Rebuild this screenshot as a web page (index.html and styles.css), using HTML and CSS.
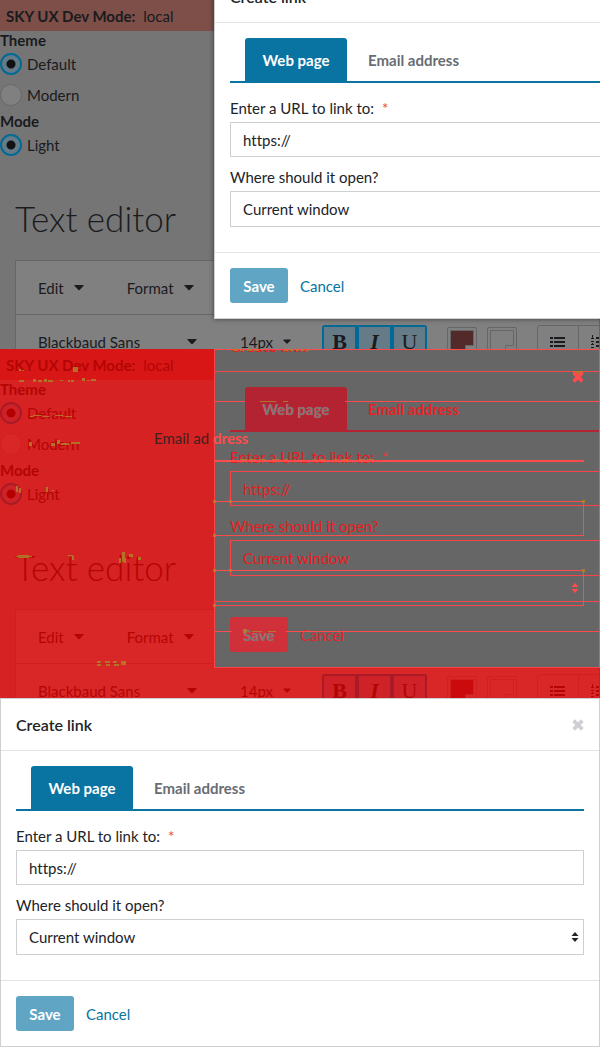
FILE: index.html
```
<!DOCTYPE html>
<html lang="en">
<head>
<meta charset="utf-8">
<meta name="viewport" content="width=device-width, initial-scale=1">
<title>Create link</title>
<link rel="stylesheet" href="styles.css">
</head>
<body>
<svg class="defs" aria-hidden="true">
  <symbol id="caret" viewBox="0 0 10 6"><path d="M0 0.4Q0 0 1 0H9Q10 0 9.6 0.8L5.6 5Q5 5.6 4.4 5L0.4 0.8Z"/></symbol>
  <symbol id="close" viewBox="0 0 12 12"><path d="M3 3L9 9M9 3L3 9" fill="none" stroke="currentColor" stroke-width="3.8" stroke-linecap="square"/></symbol>
  <symbol id="updown" viewBox="0 0 8 12"><path d="M4 1L7.500 5H.5ZM4 11L7.500 7H.5Z"/></symbol>
  <symbol id="bullets" viewBox="0 0 16 12"><path d="M0 1h3v2H0zM4 1h11v2H4zM0 5h3v2H0zM4 5h11v2H4zM0 9h3v2H0zM4 9h11v2H4z"/></symbol>
  <symbol id="numbers" viewBox="0 0 16 14"><path d="M1 0h1v4H1zM0 3h3v1H0zM0 6h3v1H0zM1 8h1v1H1zM0 9h3v1H0zM0 12h3v1H0zM5 2h10v2H5zM5 6h10v2H5zM5 10h10v2H5z"/></symbol>
  <symbol id="swatch" viewBox="0 0 30 30"><path class="swatch-frame" d="M.5 30V2Q.5 .5 2 .5H28Q29.500 .5 29.500 2V30"/><path class="swatch-fill" d="M3.500 3.500H26.500V18.500H18.500V26.500H3.500Z"/></symbol>
</svg>

<main class="stack">
  <section class="frame dimmed" aria-label="Before">
    <div class="demo">
      <div class="banner"><strong>SKY UX Dev Mode:</strong> local</div>
      <fieldset class="choices">
        <legend>Theme</legend>
        <label><input type="radio" name="theme-a" checked>Default</label>
        <label><input type="radio" name="theme-a">Modern</label>
      </fieldset>
      <fieldset class="choices">
        <legend>Mode</legend>
        <label><input type="radio" name="mode-a" checked>Light</label>
      </fieldset>
      <h1>Text editor</h1>
      <div class="editor">
        <div class="menubar">
          <button type="button">Edit<svg class="caret"><use href="#caret"/></svg></button>
          <button type="button">Format<svg class="caret"><use href="#caret"/></svg></button>
        </div>
        <div class="toolbar">
          <button type="button" class="font">Blackbaud Sans<svg class="caret"><use href="#caret"/></svg></button>
          <button type="button" class="size">14px<svg class="caret"><use href="#caret"/></svg></button>
          <div class="styles"><button type="button" class="bold">B</button><button type="button" class="italic">I</button><button type="button" class="underline">U</button></div>
          <button type="button" class="swatch filled" aria-label="Font color"><svg><use href="#swatch"/></svg></button>
          <button type="button" class="swatch" aria-label="Background color"><svg><use href="#swatch"/></svg></button>
          <div class="lists"><button type="button" aria-label="Bulleted list"><svg><use href="#bullets"/></svg></button><button type="button" aria-label="Numbered list"><svg><use href="#numbers"/></svg></button></div>
        </div>
      </div>
    </div>
    <div class="dialog floating">
      <header><h2>Create link</h2><button type="button" class="close" aria-label="Close"><svg><use href="#close"/></svg></button></header>
      <div class="body">
        <div class="tabs"><button type="button" class="tab active">Web page</button><button type="button" class="tab">Email address</button></div>
        <label for="url-a">Enter a URL to link to:<span class="required">*</span></label>
        <input id="url-a" type="text" value="https://">
        <label for="target-a">Where should it open?</label>
        <div class="select"><select id="target-a"><option>Current window</option></select><svg><use href="#updown"/></svg></div>
      </div>
      <footer><button type="button" class="save">Save</button><button type="button" class="cancel">Cancel</button></footer>
    </div>
  </section>

  <section class="frame difference" aria-label="Difference">
    <div class="demo">
      <div class="banner"><strong>SKY UX Dev Mode:</strong> local</div>
      <fieldset class="choices">
        <legend>Theme</legend>
        <label><input type="radio" name="theme-b" checked>Default</label>
        <label><input type="radio" name="theme-b">Modern</label>
      </fieldset>
      <fieldset class="choices">
        <legend>Mode</legend>
        <label><input type="radio" name="mode-b" checked>Light</label>
      </fieldset>
      <h1>Text editor</h1>
      <div class="editor">
        <div class="menubar">
          <button type="button">Edit<svg class="caret"><use href="#caret"/></svg></button>
          <button type="button">Format<svg class="caret"><use href="#caret"/></svg></button>
        </div>
        <div class="toolbar">
          <button type="button" class="font">Blackbaud Sans<svg class="caret"><use href="#caret"/></svg></button>
          <button type="button" class="size">14px<svg class="caret"><use href="#caret"/></svg></button>
          <div class="styles"><button type="button" class="bold">B</button><button type="button" class="italic">I</button><button type="button" class="underline">U</button></div>
          <button type="button" class="swatch filled" aria-label="Font color"><svg><use href="#swatch"/></svg></button>
          <button type="button" class="swatch" aria-label="Background color"><svg><use href="#swatch"/></svg></button>
          <div class="lists"><button type="button" aria-label="Bulleted list"><svg><use href="#bullets"/></svg></button><button type="button" aria-label="Numbered list"><svg><use href="#numbers"/></svg></button></div>
        </div>
      </div>
    </div>
    <div class="dialog floating">
      <header><h2>Create link</h2><button type="button" class="close" aria-label="Close"><svg><use href="#close"/></svg></button></header>
      <div class="body">
        <div class="tabs"><button type="button" class="tab active">Web page</button><button type="button" class="tab">Email address</button></div>
        <label for="url-b">Enter a URL to link to:<span class="required">*</span></label>
        <input id="url-b" type="text" value="https://">
        <label for="target-b">Where should it open?</label>
        <div class="select"><select id="target-b"><option>Current window</option></select><svg><use href="#updown"/></svg></div>
      </div>
      <footer><button type="button" class="save">Save</button><button type="button" class="cancel">Cancel</button></footer>
    </div>
    <svg class="traces" width="600" height="349" viewBox="0 0 600 349">
      <path class="trace" d="M214 0h386v1H214zM214 52h31v1H214zM345 52h255v1H345zM214 111h370v2H214zM214 152h370v1H214zM583 152h1v35h-1zM214 186h370v1H214zM214 221h370v1H214zM583 221h1v36h-1zM214 256h370v1H214zM214 282h18v1H214zM286 282h314v1H286zM599 0h1v319h-1z"/>
      <path class="fleck" d="M19 20h2v2h-2zM22 21h2v1h-2zM73 18h5v5h-5zM19 31h5v2h-5zM33 30h3v3h-3zM38 31h4v2h-4zM44 30h3v3h-3zM48 31h5v2h-5zM60 31h3v1h-3zM68 31h2v2h-2zM71 31h3v2h-3zM82 29h3v3h-3zM87 31h3v1h-3zM91 30h5v2h-5zM30 67h3v1h-3zM33 66h8v1h-8zM43 67h6v1h-6zM55 66h8v1h-8zM65 67h7v1h-7zM29 93h3v4h-3zM51 94h4v3h-4zM57 91h3v4h-3zM61 94h8v2h-8zM71 93h9v2h-9zM16 137h2v6h-2zM19 139h2v5h-2zM46 138h2v5h-2zM52 141h2v1h-2zM16 207h16v1H16zM18 206h11v3H18zM68 206h5v1h-5zM72 207h2v4h-2zM119 209h2v5h-2zM122 203h3v10h-3zM124 209h2v5h-2zM129 205h4v3h-4zM138 208h3v3h-3zM97 312h4v2h-4zM97 315h4v2h-4zM105 312h5v2h-5zM106 315h4v2h-4zM113 312h4v2h-4zM114 315h5v2h-5zM121 312h5v4h-5zM213 151h3v3h-3zM213 185h3v3h-3zM213 220h3v3h-3zM213 255h3v3h-3zM229 151h3v3h-3zM229 220h3v3h-3zM260 52h16v1h-16zM283 52h5v1h-5zM243 280h4v4h-4zM252 282h10v1h-10zM268 282h8v1h-8zM573 22h10v3h-10zM233 0h5v2h-5zM240 1h4v1h-4zM247 0h5v2h-5zM254 1h5v1h-5zM284 1h4v1h-4zM290 0h3v2h-3zM296 1h3v1h-3zM301 0h3v2h-3zM306 1h3v1h-3zM240 110h7v1h-7zM249 110h7v1h-7zM259 110h7v1h-7zM272 110h7v1h-7zM284 110h4v1h-4zM313 110h4v1h-4zM320 110h5v1h-5zM334 110h4v1h-4zM341 110h8v1h-8zM359 110h5v1h-5zM367 110h7v1h-7zM582 151h3v3h-3zM582 220h3v3h-3z"/>
      <svg x="572" y="22" width="12" height="12" class="trace mark"><use href="#close"/></svg>
      <svg x="571" y="232" width="8" height="14" class="trace"><use href="#updown"/></svg>
      <text x="154" y="95" class="ghost-text">Email ad<tspan class="ghost-bright" x="213">dress</tspan></text>
    </svg>
  </section>

  <section class="dialog" aria-label="After">
    <header><h2>Create link</h2><button type="button" class="close" aria-label="Close"><svg><use href="#close"/></svg></button></header>
    <div class="body">
      <div class="tabs"><button type="button" class="tab active">Web page</button><button type="button" class="tab">Email address</button></div>
      <label for="url-c">Enter a URL to link to:<span class="required">*</span></label>
      <input id="url-c" type="text" value="https://">
      <label for="target-c">Where should it open?</label>
      <div class="select"><select id="target-c"><option>Current window</option></select><svg><use href="#updown"/></svg></div>
    </div>
    <footer><button type="button" class="save">Save</button><button type="button" class="cancel">Cancel</button></footer>
  </section>
</main>
</body>
</html>
```
FILE: styles.css
```
* { box-sizing: border-box; }
body { margin: 0; font: 15px/20px Lato, "Open Sans", sans-serif; font-variant-ligatures: none; color: #212327; }
button, input, select { font: inherit; font-variant-ligatures: none; color: inherit; }
button { background: none; border: 0; padding: 0; cursor: pointer; white-space: nowrap; }
svg { fill: currentColor; display: block; }
.defs { position: absolute; width: 0; height: 0; }

/* The snapshots take the height of the dialog in the last row. */
.stack { display: grid; grid-auto-rows: 1fr; }
.frame { position: relative; overflow: hidden; contain: size; color: var(--ink); background: var(--page); }

.dimmed {
  --ink: #1a1b1e; --page: #757575; --banner: #7d4f48; --panel: #808080; --line: #666;
  --ring: #006a96; --chosen: #657c88; --unchosen: #808080; --ring-off: #686868; --dot: #111214;
  --swatch: #532a2a;
}
.difference {
  --ink: #b40505; --page: #d62222; --banner: #d91616; --panel: #d92727; --line: #ce2020;
  --ring: #ab1b25; --chosen: #cf2228; --unchosen: #d92626; --ring-off: #cf2222; --dot: #b50000;
  --swatch: #cb0a0d;
}

.demo { display: flex; flex-direction: column; }
.banner { background: var(--banner); padding: 6px 6px 5px; }
.banner strong { margin-right: 4px; }
.choices { border: 0; margin: 0; padding: 0; min-width: 0; }
.choices legend { padding: 0; font-weight: 700; line-height: 19px; }
.choices label { display: flex; align-items: center; gap: 5px; height: 31px; padding-bottom: 3px; }
.choices input {
  appearance: none; margin: 0; width: 22px; height: 22px; border-radius: 50%;
  border: 1px solid var(--ring-off); background: var(--unchosen);
}
.choices input:checked {
  border: 2px solid var(--ring);
  background: radial-gradient(circle at center, var(--dot) 4px, var(--chosen) 5px);
}
.demo h1 { margin: 34px 15px 20px; font-size: 35px; font-weight: 300; line-height: 44px; }

.editor { margin-left: 15px; border: 1px solid var(--line); background: var(--panel); }
.menubar, .toolbar { display: flex; align-items: center; padding-left: 22px; height: 54px; overflow: hidden; }
.menubar { gap: 43px; border-bottom: 1px solid var(--line); }
.menubar button, .font, .size { display: flex; align-items: center; justify-content: space-between; gap: 10px; }
.caret { width: 10px; height: 6px; }
.toolbar > * { flex: none; }
.font { width: 159px; margin-right: 43px; }
.size { width: 51px; margin-right: 31px; }
.styles { display: flex; margin-right: 20px; border-radius: 3px; overflow: hidden; font: 22px/30px "Liberation Serif", serif; }
.styles button { width: 35px; height: 34px; border: 2px solid var(--ring); background: var(--chosen); line-height: 28px; }
.styles .bold, .styles .italic { font-weight: 700; }
.styles .italic { font-style: italic; }
.styles .underline { text-decoration: underline; }
.swatch { width: 30px; height: 30px; margin-right: 10px; }
.swatch svg { width: 30px; height: 30px; }
.swatch-frame { fill: none; stroke: var(--line); }
.swatch-fill { stroke: var(--line); fill: var(--fill, none); }
.filled { --fill: var(--swatch); }
.lists { display: flex; margin-left: 10px; border: 1px solid var(--line); border-radius: 3px; }
.lists button { display: grid; place-items: center; width: 40px; height: 32px; }
.lists button + button { border-left: 1px solid var(--line); }
.lists svg { width: 16px; height: 14px; }

.dialog {
  --ink: #212327; --surface: #fff; --border: #cdcfd2; --rule: #e2e3e4; --brand: #0974a1;
  --on-brand: #fff; --muted: #686c73; --save: #60a5c4; --alert: #ef4044; --close: #cdcfd2;
  background: var(--surface); border: 1px solid var(--border); color: var(--ink);
}
.floating { position: absolute; top: -30px; left: 214px; width: 100%; box-shadow: 0 0 5px rgba(0, 0, 0, .5); }
.difference .floating {
  --ink: #e81b1e; --surface: #666; --border: #f84448; --rule: #f4484b; --brand: #b32331;
  --on-brand: #777; --muted: #e52327; --save: #cf303a; --alert: #ff3034; --close: #ff4b4b;
  box-shadow: none;
}
.dialog header { display: flex; align-items: center; justify-content: space-between; height: 52px; padding: 0 15px; border-bottom: 1px solid var(--rule); }
.dialog h2 { margin: 0; font-size: 16px; font-weight: 600; }
.close { color: var(--close); }
.close svg { width: 12px; height: 12px; }
.body { padding: 15px 15px 25px; }
.body > label { display: block; margin-bottom: 4px; }
.tabs { display: flex; gap: 5px; padding-left: 15px; margin-bottom: 15px; border-bottom: 2px solid var(--brand); }
.tab { height: 43px; padding: 0 16px; color: var(--muted); font-weight: 700; }
.tab.active { min-width: 102px; background: var(--brand); color: var(--on-brand); border-radius: 3px 3px 0 0; }
.difference .tab.active, .difference .save { text-shadow: 0 0 1px #ff5055; }
.required { margin-left: 8px; color: var(--alert); }
.body input, .body select { display: block; width: 100%; height: 35px; padding: 0 12px; border: 1px solid var(--border); border-radius: 0; background: transparent; }
.body input { margin-bottom: 10px; }
.select { position: relative; }
.body select { height: 36px; appearance: none; }
.select svg { position: absolute; right: 5px; top: 12px; width: 8px; height: 12px; pointer-events: none; }
.dialog footer { display: flex; align-items: center; gap: 12px; padding: 15px; border-top: 1px solid var(--rule); }
.save { min-width: 58px; height: 35px; border-radius: 3px; background: var(--save); color: var(--on-brand); font-weight: 700; }
.cancel { color: var(--brand); }
.difference .cancel { color: var(--muted); }

.traces { position: absolute; top: 0; left: 0; }
.trace { fill: #ff4b4b; }
.mark { color: #ff4b4b; }
.fleck { fill: #b08029; fill-opacity: .85; }
.ghost-text { fill: #432020; }
.ghost-bright { fill: #ff4b4b; font-weight: 700; }
```
